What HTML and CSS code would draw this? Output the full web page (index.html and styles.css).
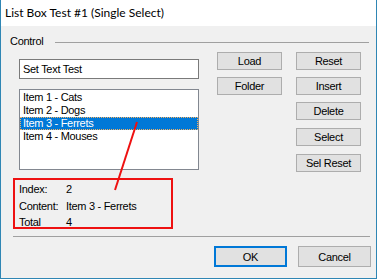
FILE: index.html
```html
<!DOCTYPE html>
<html lang="en">
<head>
    <meta charset="UTF-8">
    <title>List Box Test #1 (Single Select)</title>
    <link rel="stylesheet" href="styles.css">
</head>
<body>

    <div class="window">
        <div class="titlebar">List Box Test #1 (Single Select)</div>

        <div class="client">
            <div class="group-head">
                <span class="group-label">Control</span>
                <span class="group-line"></span>
            </div>

            <div class="group-body">
                <div class="left">
                    <div class="textbox">Set Text Test</div>
                    <ul class="listbox">
                        <li>Item 1 - Cats</li>
                        <li>Item 2 - Dogs</li>
                        <li class="selected">Item 3 - Ferrets</li>
                        <li>Item 4 - Mouses</li>
                    </ul>
                    <div class="info">
                        <div class="info-row"><span class="info-key">Index:</span><span>2</span></div>
                        <div class="info-row"><span class="info-key">Content:</span><span>Item 3 - Ferrets</span></div>
                        <div class="info-row"><span class="info-key">Total</span><span>4</span></div>
                    </div>
                </div>

                <div class="buttons">
                    <button class="btn">Load</button>
                    <button class="btn">Reset</button>
                    <button class="btn">Folder</button>
                    <button class="btn">Insert</button>
                    <button class="btn col2">Delete</button>
                    <button class="btn col2">Select</button>
                    <button class="btn col2">Sel Reset</button>
                </div>
            </div>

            <div class="separator"></div>

            <div class="footer">
                <button class="btn dlg default">OK</button>
                <button class="btn dlg">Cancel</button>
            </div>
        </div>

        <!-- annotation arrow from the selected item to the info box -->
        <svg class="pointer" width="377" height="279">
            <line x1="137" y1="122" x2="115" y2="190" stroke="#ee1111" stroke-width="2"/>
        </svg>
    </div>

</body>
</html>
```

FILE: styles.css
```css
body {
    margin: 0;
    padding: 0;
    font-family: "Liberation Sans", Arial, sans-serif;
    font-size: 11px;
    letter-spacing: -0.3px;
    color: #000;
}

.window {
    position: relative;
    width: 377px;
    height: 279px;
    box-sizing: border-box;
    border: 1px solid #2f86b4;
    border-top: none;
    background-color: #f0f0f0;
    display: flex;
    flex-direction: column;
}

.titlebar {
    height: 26px;
    background-color: #fff;
    font-family: "Lato", "Liberation Sans", sans-serif;
    font-size: 12px;
    letter-spacing: 0;
    line-height: 26px;
    padding-left: 4px;
}

.client {
    flex: 1;
    display: flex;
    flex-direction: column;
}

.group-head {
    display: flex;
    align-items: center;
    margin-top: 8px;
    height: 13px;
}

.group-label {
    padding-left: 9px;
    box-sizing: border-box;
    width: 54px;
}

.group-line {
    flex: 1;
    height: 1px;
    margin-top: 3px;
    margin-right: 7px;
    background-color: #a0a0a0;
}

.group-body {
    display: flex;
    margin-top: 5px;
}

.left {
    width: 180px;
    margin-left: 18px;
    padding-top: 7px;
}

.textbox {
    height: 20px;
    box-sizing: border-box;
    border: 1px solid #7a7a7a;
    background-color: #fff;
    padding-left: 3px;
    line-height: 18px;
}

.listbox {
    list-style: none;
    margin: 10px 0 0;
    padding: 1px 0 0;
    height: 81px;
    box-sizing: border-box;
    border: 1px solid #828790;
    background-color: #fff;
}

.listbox li {
    height: 13px;
    line-height: 13px;
    padding-left: 3px;
}

.listbox li.selected {
    background-color: #0078d7;
    color: #fff;
    outline: 1px dotted #f5b060;
    outline-offset: -1px;
}

.info {
    margin: 8px 0 0 -6px;
    width: 160px;
    height: 51px;
    box-sizing: border-box;
    border: 2px solid #ee1111;
    padding: 1px 0 0 4px;
}

.info-row {
    display: flex;
    height: 16.7px;
    line-height: 16.7px;
}

.info-key {
    width: 47px;
}

.buttons {
    display: grid;
    grid-template-columns: 65px 65px;
    grid-template-rows: 25px 25px 26px 26px 18px;
    column-gap: 14px;
    margin-left: 18px;
    align-items: start;
}

.btn {
    height: 18px;
    box-sizing: border-box;
    border: 1px solid #adadad;
    background-color: #e1e1e1;
    font-family: "Liberation Sans", Arial, sans-serif;
    font-size: 11px;
    letter-spacing: -0.3px;
    color: #000;
    padding: 0;
}

.col2 {
    grid-column: 2;
}

.separator {
    height: 1px;
    background-color: #a0a0a0;
    margin: 7px 6px 0 12px;
}

.footer {
    display: flex;
    justify-content: flex-end;
    gap: 11px;
    margin-top: 9px;
    padding-right: 5px;
}

.dlg {
    width: 73px;
    height: 21px;
}

.default {
    border: 2px solid #0078d7;
}

.pointer {
    position: absolute;
    left: -1px;
    top: 0;
    pointer-events: none;
}
```
